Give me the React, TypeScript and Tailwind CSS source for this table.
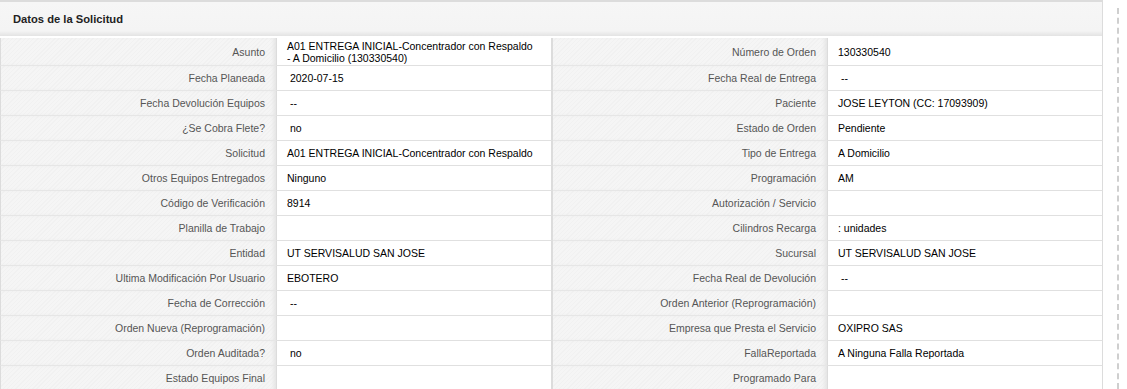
const rows: [string, string, string, string][] = [
  ["Fecha Planeada", " 2020-07-15", "Fecha Real de Entrega", " --"],
  ["Fecha Devolución Equipos", " --", "Paciente", "JOSE LEYTON (CC: 17093909)"],
  ["¿Se Cobra Flete?", " no", "Estado de Orden", "Pendiente"],
  ["Solicitud", "A01 ENTREGA INICIAL-Concentrador con Respaldo", "Tipo de Entrega", "A Domicilio"],
  ["Otros Equipos Entregados", "Ninguno", "Programación", "AM"],
  ["Código de Verificación", "8914", "Autorización / Servicio", ""],
  ["Planilla de Trabajo", "", "Cilindros Recarga", ": unidades"],
  ["Entidad", "UT SERVISALUD SAN JOSE", "Sucursal", "UT SERVISALUD SAN JOSE"],
  ["Ultima Modificación Por Usuario", "EBOTERO", "Fecha Real de Devolución", " --"],
  ["Fecha de Corrección", " --", "Orden Anterior (Reprogramación)", ""],
  ["Orden Nueva (Reprogramación)", "", "Empresa que Presta el Servicio", "OXIPRO SAS"],
  ["Orden Auditada?", " no", "FallaReportada", "A Ninguna Falla Reportada"],
  ["Estado Equipos Final", "", "Programado Para", ""],
];

const labelCls =
  "flex items-center justify-end pr-[11px] text-right text-[#555] border-b border-b-[#e6e6e6] bg-[#f4f4f4] bg-[image:repeating-linear-gradient(135deg,#f5f5f5_0px,#f5f5f5_2px,#f1f1f1_2px,#f1f1f1_3px)] shadow-[inset_-4px_0_4px_-2px_#e2e2e2] border-r border-r-[#dcdcdc]";

function Label({ children, h, first }: { children: React.ReactNode; h: string; first?: boolean }) {
  return <div className={`${labelCls} ${h} ${first ? "border-l border-l-[#dcdcdc]" : ""}`}>{children}</div>;
}

function Value({ children, h, last }: { children: React.ReactNode; h: string; last?: boolean }) {
  return (
    <div
      className={`flex items-center pl-[10px] pr-2 whitespace-pre text-black bg-white border-b border-b-[#e0e0e0] ${h} ${
        last ? "border-r border-r-[#dcdcdc]" : "border-r-2 border-r-[#dcdcdc]"
      }`}
    >
      {children}
    </div>
  );
}

export default function App() {
  return (
    <div className="h-[389px] w-[1127px] overflow-hidden bg-white flex font-['Liberation_Sans',Arial,sans-serif] text-[10.5px]">
      <div className="w-[1103px] flex flex-col">
        {/* Header */}
        <div className="h-[36px] border-t-2 border-t-[#dcdcdc] border-r border-r-[#dcdcdc] bg-linear-to-b from-[#f6f6f6] via-[#f4f4f4] via-85% to-[#e3e3e3] flex items-center pl-[13px] shrink-0">
          <span className="font-bold text-[11.2px] text-[#222]">Datos de la Solicitud</span>
        </div>
        <div className="h-[2px] border-r border-r-[#dcdcdc] shrink-0" />

        {/* Table */}
        <div className="grid grid-cols-[277px_276px_275px_275px] leading-[12px]">
          <Label h="h-[28px]" first>Asunto</Label>
          <Value h="h-[28px]">
            {"A01 ENTREGA INICIAL-Concentrador con Respaldo\n- A Domicilio (130330540)"}
          </Value>
          <Label h="h-[28px]">Número de Orden</Label>
          <Value h="h-[28px]" last>130330540</Value>

          {rows.map(([l1, v1, l2, v2]) => (
            <div key={l1} className="contents">
              <Label h="h-[25px]" first>{l1}</Label>
              <Value h="h-[25px]">{v1}</Value>
              <Label h="h-[25px]">{l2}</Label>
              <Value h="h-[25px]" last>{v2}</Value>
            </div>
          ))}
        </div>
      </div>

      <div className="ml-[14px] mt-[8px] w-0 h-[381px] border-l-2 border-dashed border-l-[#cfcfcf]" />
    </div>
  );
}
